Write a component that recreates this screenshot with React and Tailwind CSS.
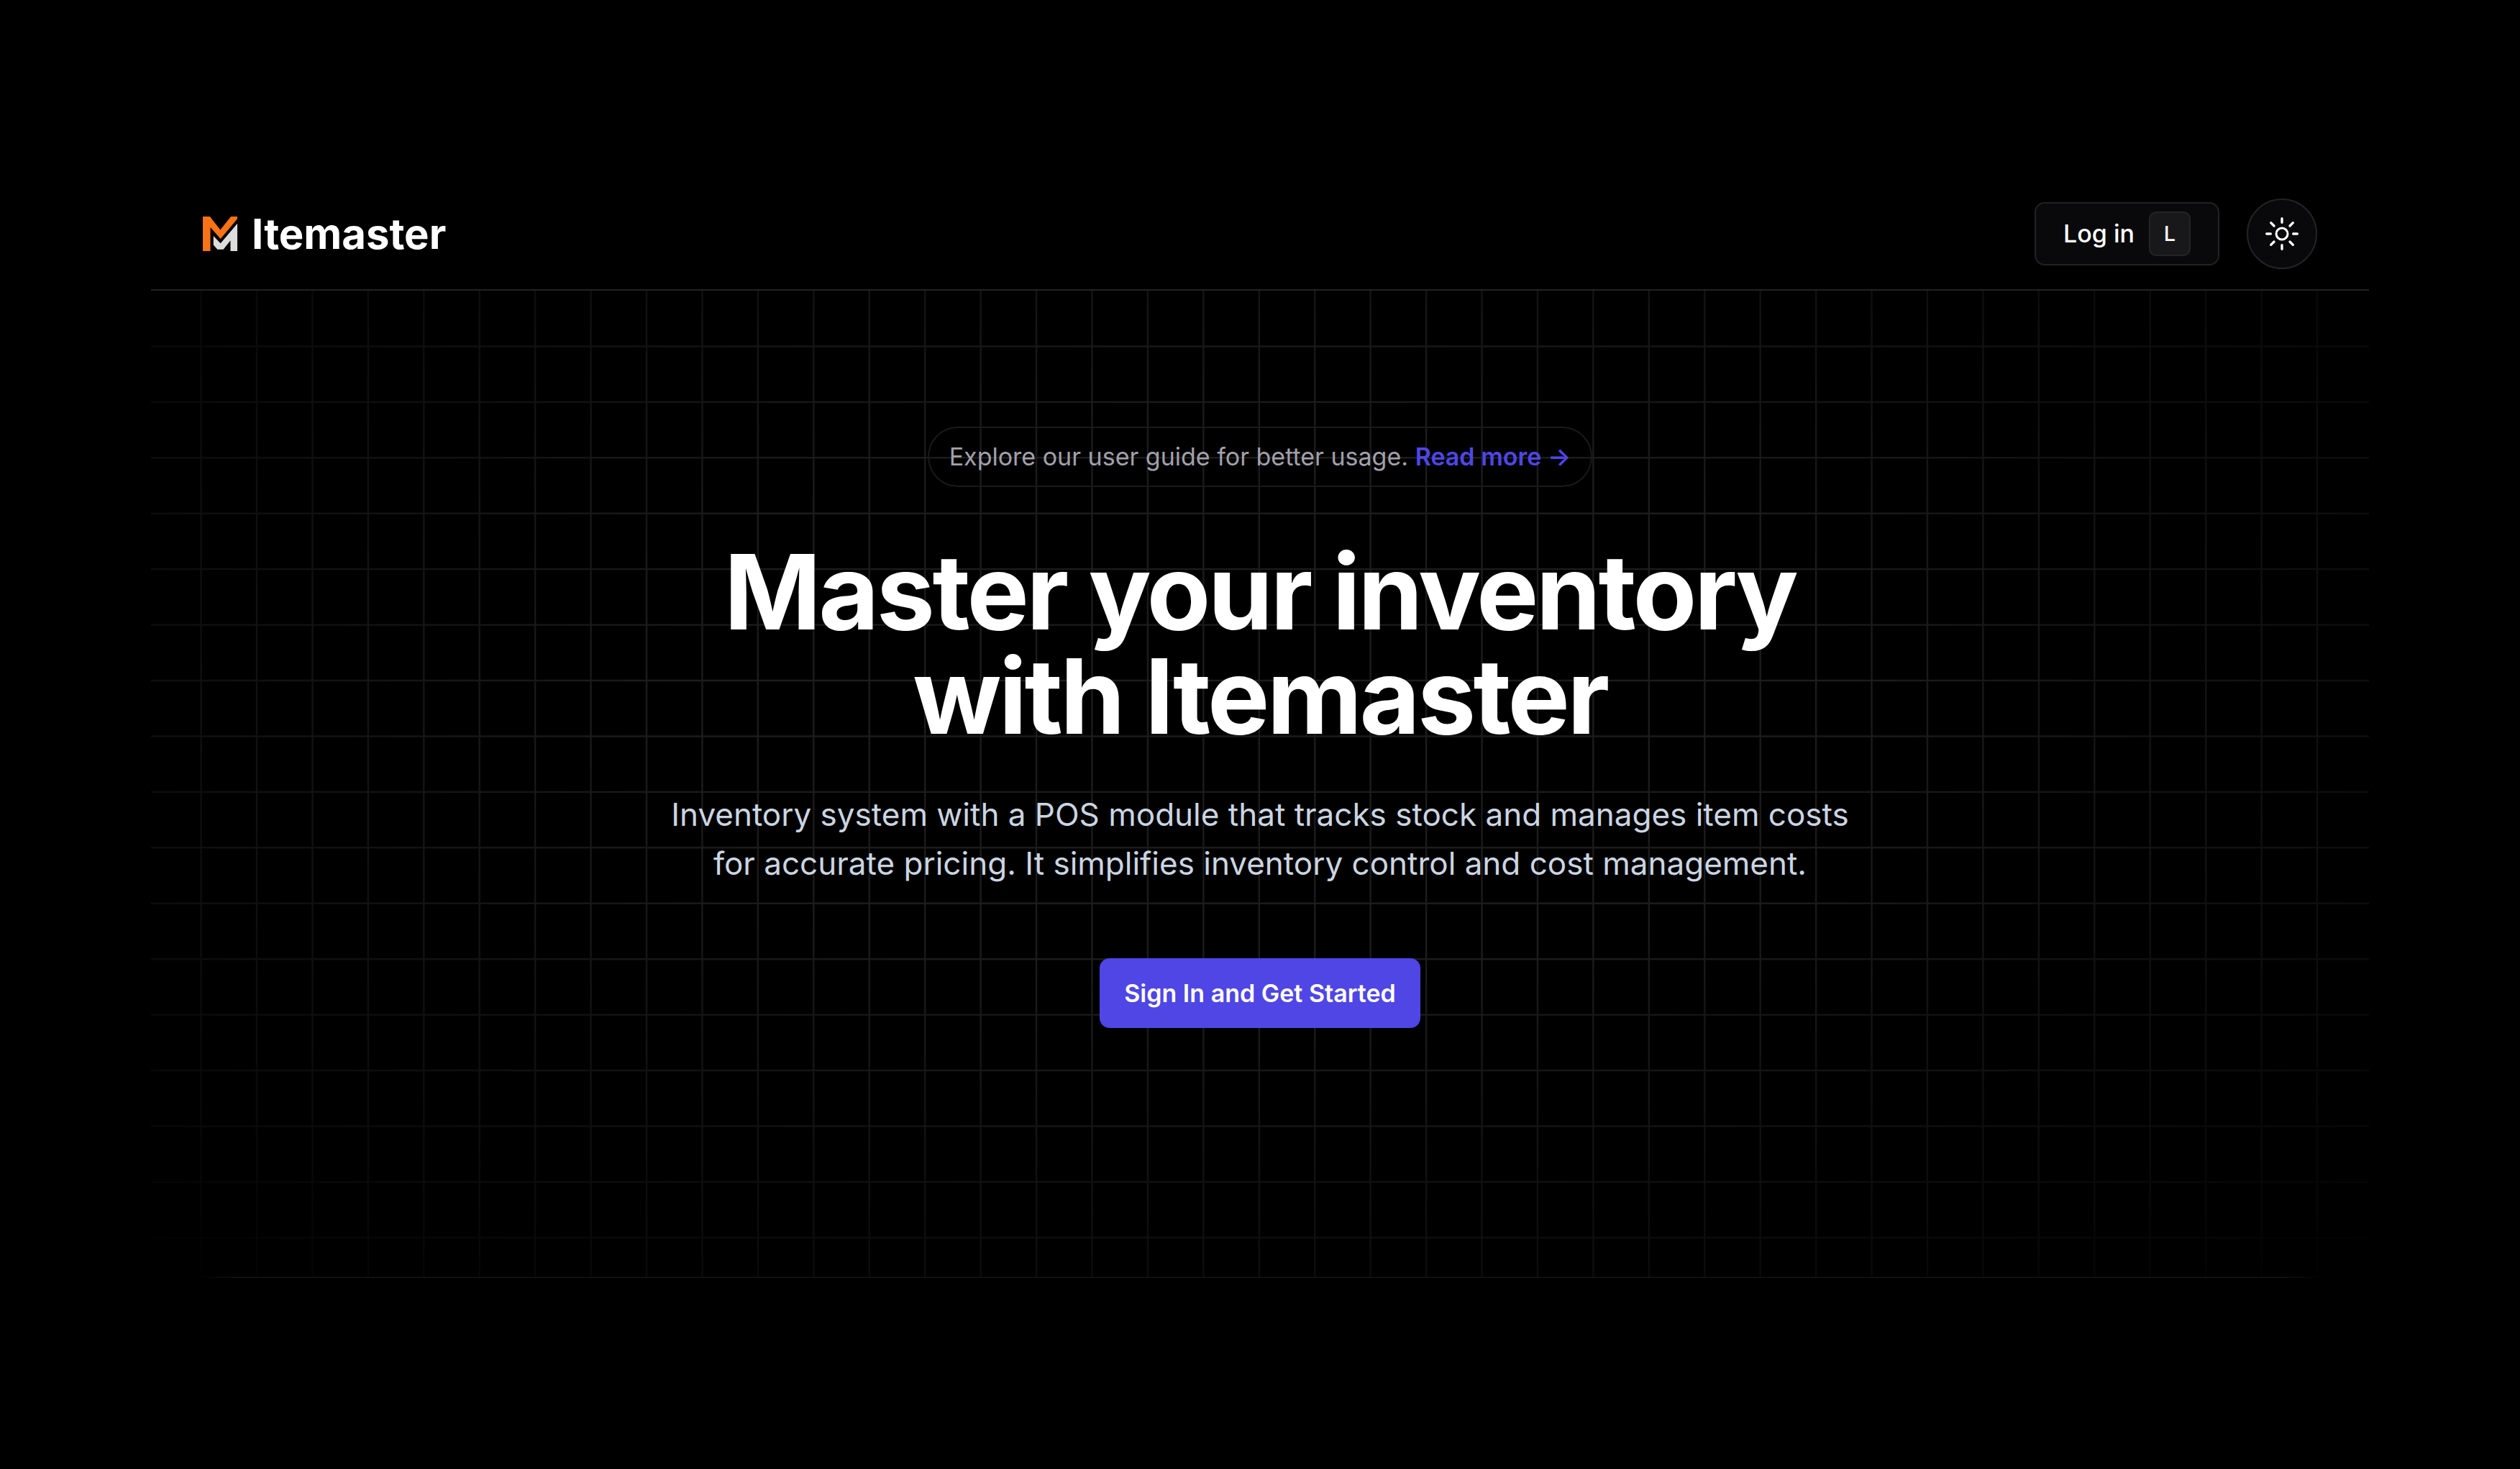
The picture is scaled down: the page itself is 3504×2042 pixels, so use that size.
const LINES_X = Array.from({ length: 40 }, (_, i) => 30 + i * 32);
const LINES_Y = Array.from({ length: 17 }, (_, i) => 32 + i * 32);

function Logo() {
  return (
    <svg viewBox="0 0 146 146" className="size-12" aria-hidden="true">
      <path fill="#f97316" d="M0 0H30L74 56L119 0H146V10L75 94L32 46V146H0Z" />
      <path fill="#dcdcdc" d="M45 82L75 113L146 30V146H117V101L87 139H62L45 120Z" />
    </svg>
  );
}

function SunIcon() {
  return (
    <svg viewBox="0 0 138 138" fill="none" stroke="currentColor" strokeWidth="10" strokeLinecap="round" className="size-[46px]" aria-hidden="true">
      <circle cx="69" cy="69" r="24" strokeWidth="9" />
      <path d="M69 5V22M69 116V133M5 69H22M116 69H133M23 23L36 36M102 102L115 115M23 115L36 102M102 36L115 23" />
    </svg>
  );
}

function Grid() {
  return (
    <svg
      viewBox="0 0 1277 567"
      preserveAspectRatio="xMidYMin slice"
      className="absolute inset-0 size-full [mask-image:radial-gradient(ellipse_75%_82%_at_50%_42%,#000_35%,transparent_100%)]"
      aria-hidden="true"
    >
      <g stroke="#1c1c1c" strokeWidth="1">
        {LINES_X.map((x) => (
          <line key={x} x1={x} x2={x} y1="0" y2="567" />
        ))}
        {LINES_Y.map((y) => (
          <line key={y} x1="0" x2="1277" y1={y} y2={y} />
        ))}
      </g>
    </svg>
  );
}

export default function App() {
  return (
    <div className="min-h-screen bg-black px-[210px] pt-[248px] pb-[268px] font-['Inter',sans-serif] text-white">
      <header className="flex h-[156px] items-center justify-between border-b-2 border-[#222222] px-[72px]">
        <a href="#" className="flex items-center gap-5">
          <Logo />
          <span className="text-[58px] leading-[72px] font-bold">Itemaster</span>
        </a>
        <div className="flex items-center gap-[38px]">
          <button type="button" className="flex h-[88px] items-center gap-5 rounded-[14px] border-2 border-[#222224] bg-[#09090b] px-[38px] text-[34px] leading-[48px] font-medium">
            Log in
            <kbd className="flex h-[62px] w-[58px] items-center justify-center rounded-[10px] border-2 border-[#242426] bg-[#18181a] font-['Inter',sans-serif] text-[29px] font-medium text-[#fafafa]">
              L
            </kbd>
          </button>
          <button type="button" aria-label="Toggle theme" className="flex size-[98px] items-center justify-center rounded-full border-2 border-[#242426] bg-[#09090b]">
            <SunIcon />
          </button>
        </div>
      </header>

      <main className="relative flex flex-col items-center pt-[189px] pb-[347px] text-center">
        <Grid />
        <p className="relative rounded-full border-2 border-[#1a1a1a] px-7 py-4 text-[34px] leading-[48px] text-[#a1a1aa]">
          Explore our user guide for better usage.{" "}
          <a href="#" className="font-semibold text-[#4f46e5]">
            Read more <span aria-hidden="true">→</span>
          </a>
        </p>
        <h1 className="relative mt-[73px] text-[145px] leading-[145px] font-bold tracking-tight">
          Master your inventory
          <br />
          with Itemaster
        </h1>
        <p className="relative mt-[58px] text-[44px] leading-[68px] text-[#cbd5e1]">
          Inventory system with a POS module that tracks stock and manages item costs
          <br />
          for accurate pricing. It simplifies inventory control and cost management.
        </p>
        <button type="button" className="relative mt-[98px] h-[97px] rounded-[14px] bg-[#4f46e5] px-[34px] text-[34px] leading-[48px] font-semibold">
          Sign In and Get Started
        </button>
        <div className="absolute inset-x-0 bottom-0 h-px bg-[linear-gradient(to_right,transparent_2%,#1c1c1c_4%,#1c1c1c_96%,transparent_98%)]" />
      </main>
    </div>
  );
}
